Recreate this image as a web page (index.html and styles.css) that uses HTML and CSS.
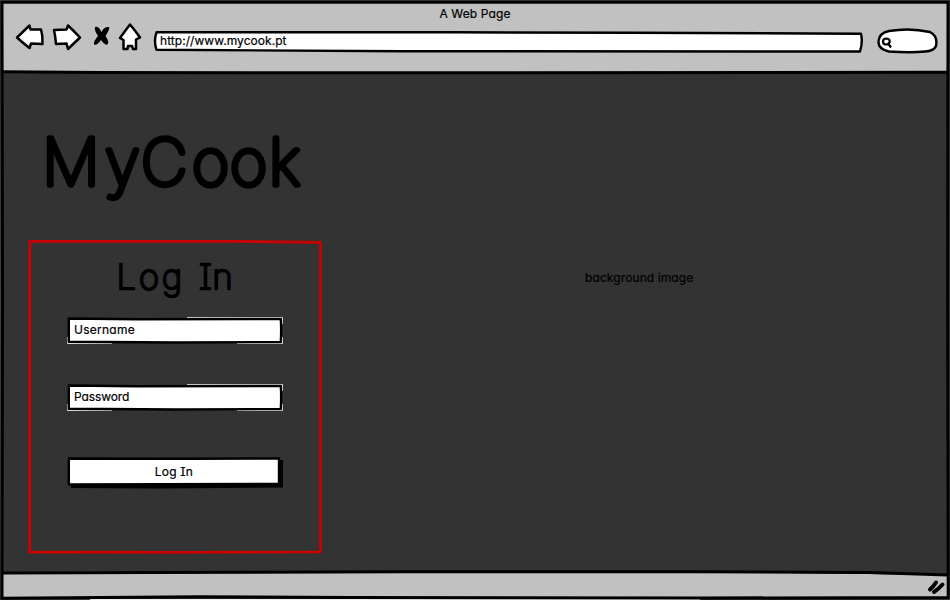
FILE: index.html
```html
<!DOCTYPE html>
<html lang="en">
<head>
<meta charset="utf-8">
<title>A Web Page</title>
<link rel="stylesheet" href="styles.css">
</head>
<body>
<div class="window">
  <header class="chrome">
    <div class="window-title"><span class="t-title">A Web Page</span></div>
    <div class="toolbar">
      <svg class="nav-icons" width="130" height="32" viewBox="14 22 130 32">
        <g fill="#fff" stroke="#000" stroke-width="2.5" stroke-linejoin="round">
          <path d="M17 37.500L29.500 25.500L30.500 29.500L41 29.500Q43 36 42.500 44L31 43.500L29.500 48Q23 43 17 37.500Z"/>
          <path d="M54 30L66.500 29.500L68 25.500Q74 31 80 37.500L68 49L66.500 43.500L56 44Q55.500 37 54 30Z"/>
          <path d="M130 24.500Q135.500 31 140 37.500L136 39.500L136 49L133 49L132 46L128 46L127.500 49L123.500 49L123.500 40L120 38Q125 31 130 24.500Z"/>
        </g>
        <path d="M95 27Q98.500 25.500 101.500 32Q104 26.500 109 27Q110.500 28 105.500 36Q110.500 43 106.500 45Q103.500 44 101 40Q97 46 94 44.500Q93.500 41 98 36Q94 30 95 27Z"/>
      </svg>
      <div class="address">
        <svg class="sketch" viewBox="0 0 710 22" preserveAspectRatio="none"><path d="M3.500 1.300L300 1.300L480 1.800L708 2.700Q710 11 707 20.500L250 20.200L3.500 18.800Q.5 10 3.500 1.300Z"/></svg>
        <span class="t-url">http://www.mycook.pt</span>
      </div>
      <svg class="search" width="62" height="28" viewBox="876 27 62 28">
        <path d="M889 31Q910 27.500 930 32Q938 36 936 46Q934 51 925 51.500Q911 53 889 51.500Q878 49 878.500 41.500Q879 33 889 31Z" fill="#fff" stroke="#000" stroke-width="2.400"/>
        <path d="M883 41.500Q883 38.500 886.500 38.500Q890 38.800 889.700 42Q888.500 44.700 885.500 44.500Q883 44.300 883 41.500ZM888.500 44L891 47.500" fill="none" stroke="#000" stroke-width="2.200"/>
      </svg>
    </div>
  </header>
  <main class="page">
    <section class="side">
      <h1><svg width="290" height="110" viewBox="28 115 290 110"><text y="185.300" x="42.200 105 141 192 230 269">MyCook</text></svg></h1>
      <form class="login">
        <svg class="sketch red" viewBox="0 0 294 314"><path d="M1.700 1.300L200 1.300L292.500 2.300L292.500 311.800L150 312.300L1.700 312Z"/></svg>
        <h2><svg width="180" height="60" viewBox="95 250 180 60"><text y="288.800" x="116.500 139 162 190 199 212.500">Log In</text></svg></h2>
        <div class="field">
          <svg class="sketch" viewBox="0 0 216 27"><path class="under" d="M.5 26.500V20M.5 26.500H45M120 .5H215.500V7M215.500 20V26.500H170"/><path d="M1.800 1.500L70 2.200L213.800 2Q214.500 13 213.800 25L110 25.500L1.800 24.700Z"/></svg>
          <span class="t-user">Username</span>
        </div>
        <div class="field">
          <svg class="sketch" viewBox="0 0 216 27"><path class="under" d="M.5 26.500V20M.5 26.500H45M120 .5H215.500V7M215.500 20V26.500H170"/><path d="M1.800 1.500L70 2.200L213.800 2Q214.500 13 213.800 25L110 25.500L1.800 24.700Z"/></svg>
          <span class="t-pass">Password</span>
        </div>
        <div class="button">
          <svg class="sketch" viewBox="0 0 216 32"><path class="shadow" d="M4 3H216V30.500L90 31.500L4 31Z"/><path d="M1.800 1.500L120 1.700L212 1.500V27L1.800 27.500Z"/></svg>
          <span class="t-submit">Log In</span>
        </div>
      </form>
    </section>
    <section class="hero"><span class="t-bg">background image</span></section>
  </main>
  <footer class="status"></footer>
  <svg class="frame" viewBox="0 0 950 600">
    <path class="wash" d="M0 .5H950M.5 0V600M949.500 0V600M0 599.500H250"/>
    <path class="pale" d="M90 599.500H700"/>
    <path class="base" d="M3 572L400 571L700 572L947 575V598H3Z"/>
    <path d="M2 2.200L948 2.200L947.700 300L948.200 597.500L700 598L350 597.500L200 596.800L2 598.200L2.500 300Z"/>
    <path d="M2 71.800L100 72.600L500 72.700L948 72.200M2 573L150 572.500L400 571.700L700 571.700L870 572.600L948 575"/>
  </svg>
  <svg class="grip" viewBox="926 578 20 18"><path d="M930 589.500Q933 587 936 582.500M934 592Q938 589.500 942.500 584.500"/></svg>
</div>
</body>
</html>
```
FILE: styles.css
```css
* { box-sizing: border-box; }

body {
  margin: 0;
  font-family: Inter, "Liberation Sans", sans-serif;
  font-feature-settings: "cv11", "cv08";
  font-size: 12px;
  line-height: 16px;
  color: #000;
}

.window {
  position: relative;
  display: flex;
  flex-direction: column;
  width: 950px;
  height: 600px;
  overflow: hidden;
  background: #333;
}

span { white-space: nowrap; -webkit-text-stroke: 0.2px #000; }

.chrome { height: 72px; background: #c1c1c1; }

.window-title {
  height: 22px;
  padding-top: 6px;
  text-align: center;
}

.toolbar { display: flex; align-items: flex-start; padding-left: 14px; }

.address {
  position: relative;
  display: flex;
  width: 710px;
  height: 22px;
  margin: 9px 13px 0 9px;
  padding: 2px 0 0 7px;
}

.search { margin-top: 5px; }

.sketch {
  position: absolute;
  inset: 0;
  width: 100%;
  height: 100%;
  fill: #fff;
  stroke: #000;
  stroke-width: 2.4;
  stroke-linejoin: round;
}

.sketch + span { position: relative; }

.red { fill: none; stroke: #c00; stroke-width: 2.8; }
.under { fill: none; stroke: #ddd; stroke-width: 1; }
.shadow { fill: #000; stroke: none; }

.page { display: flex; flex: 1; }

.side { width: 322px; padding-left: 28px; }

h1, h2 { margin: 0; }
h1 svg, h2 svg { display: block; overflow: visible; }

h1 { height: 168px; padding-top: 43px; }

h1 text, h2 text {
  font-weight: 100;
  stroke: #000;
  stroke-linejoin: round;
  stroke-linecap: round;
}

h1 text { font-size: 64px; stroke-width: 5.6px; }
h2 text { font-size: 34.5px; stroke-width: 2.7px; }

.login {
  position: relative;
  display: flex;
  flex-direction: column;
  width: 294px;
  height: 314px;
  padding-left: 39px;
}

h2 { height: 77px; padding: 10px 0 0 28px; }

.field {
  position: relative;
  display: flex;
  width: 216px;
  height: 27px;
  margin-bottom: 40px;
  padding: 5px 0 0 7px;
}

.button {
  position: relative;
  display: flex;
  justify-content: center;
  width: 216px;
  height: 32px;
  margin-top: 6px;
  padding: 7px 2px 0 0;
}

.hero { flex: 1; padding: 198px 0 0 263px; }

.status { height: 28px; }

.frame, .grip { position: absolute; inset: 0; }
.frame { width: 950px; height: 600px; fill: none; stroke: #000; stroke-width: 3; pointer-events: none; }
.frame .wash { stroke: #444; stroke-width: 1; }
.frame .pale { stroke: #eee; stroke-width: 1; }
.frame .base { fill: #c1c1c1; stroke: none; }
.grip { inset: auto 4px 4px auto; width: 20px; height: 18px; fill: none; stroke: #000; stroke-width: 4; stroke-linecap: round; }

.t-title { letter-spacing: 0.12px; }
.t-url { letter-spacing: 0.05px; }
.t-user { letter-spacing: 0.25px; }
.t-pass { letter-spacing: -0.1px; }
.t-submit { letter-spacing: 0.2px; }
.t-bg { letter-spacing: 0.1px; }
```
